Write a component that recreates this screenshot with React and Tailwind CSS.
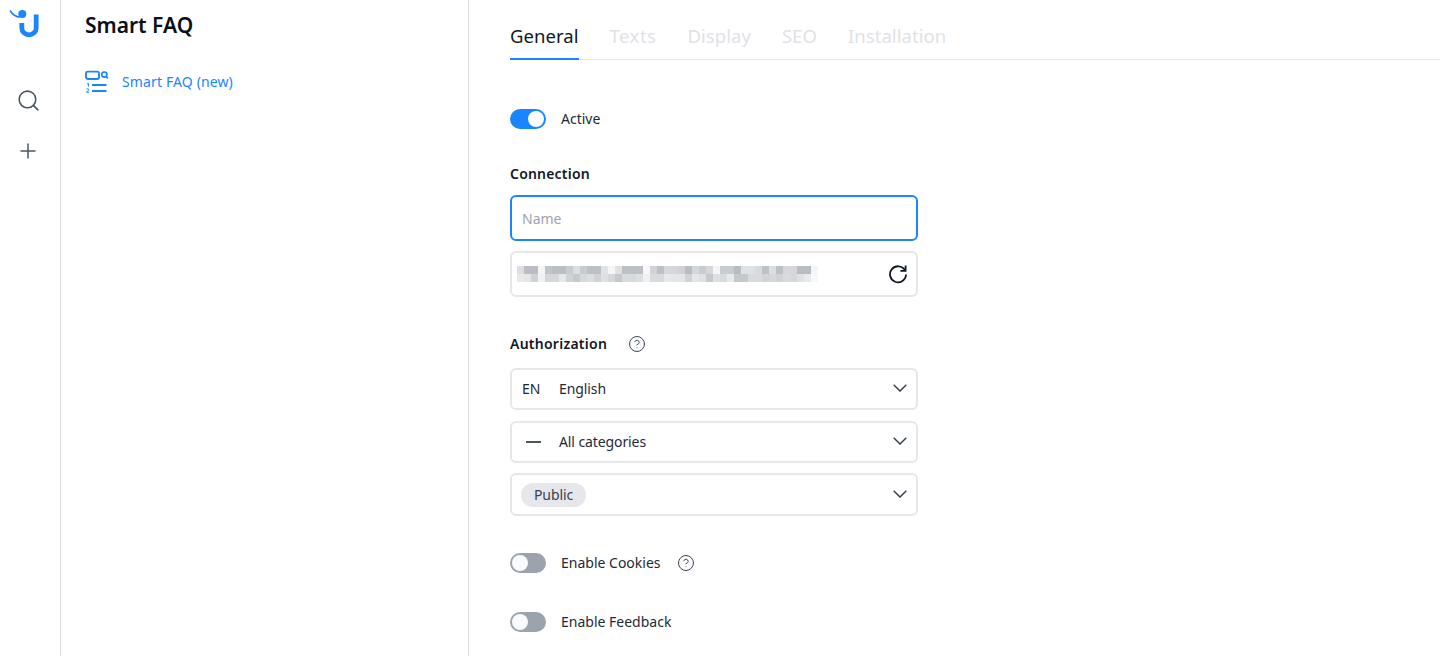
import React from "react";
import { Search, Plus, CircleHelp } from "lucide-react";

const row1 = "dcdee1 b9bdc3 b9bdc3 f5f5f6 c0c3c8 bbbfc4 bbbfc4 c8cbcf dcdee0 c8cbcf bdc0c5 bdc0c5 e2e3e5 f5f5f6 e0e1e3 bdc0c5 bdc0c5 bdc0c5 f8f8f8 d0d2d6 bdc0c5 d5d7da d5d7da d0d2d6 b9bdc3 d5d7da c8cbcf d5d7da f5f5f6 c8cbcf c8cbcf b9bdc3 e0e1e3 e0e1e3 d8dadc bdc0c5 dcdee0 bdc0c5 d5d7da d5d7da b9bdc3 b9bdc3 f5f5f6".split(" ");
const row2 = "e8e9ea e4e5e7 cfd1d5 f0f1f2 d5d7da d5d7da e6e7e9 d0d2d6 c5c8cc d5d7da dcdee0 d0d2d6 dee0e2 d5d7da c5c8cc d8dadc d8dadc dddfe1 f0f1f2 d8dadc d8dadc e8e9ea e4e5e7 e4e5e7 d0d2d6 e4e5e7 e0e1e3 c5c8cc dddfe1 d8dadc e8e9ea c5c8cc c5c8cc d8dadc d8dadc d0d2d6 d5d7da d0d2d6 d8dadc d5d7da e0e1e3 e8e9ea f8f8f8".split(" ");

function Logo() {
  return (
    <svg width="60" height="44" viewBox="0 0 60 44" fill="none" className="block self-start">
      <path d="M21.8 23V28a7.2 6.8 0 0 0 14.4 0V14.5" stroke="#1a85ff" strokeWidth="4.8" />
      <circle cx="22.3" cy="14" r="4" fill="#1a85ff" />
      <path d="M10 10.5C12.5 14.5 16 17 20 17" stroke="#1a85ff" strokeWidth="1.6" />
    </svg>
  );
}

function FaqIcon() {
  return (
    <svg width="24" height="26" viewBox="0 0 24 26" fill="none" stroke="#1a85ff" className="shrink-0">
      <rect x="1" y="2.6" width="13" height="7.4" rx="2" strokeWidth="1.9" />
      <circle cx="19.3" cy="5.6" r="2.6" strokeWidth="1.7" />
      <path d="M21.2 7.6l1.8 1.8" strokeWidth="1.7" />
      <path d="M7 16h14.5M7 22h14.5" strokeWidth="1.9" />
      <path d="M2 15l1.4-.7v3.4M1.4 20.2c.7-.9 2.8-.6 2.3.8-.2.6-1.5 1.2-2.3 2.2h2.8" strokeWidth="1" />
    </svg>
  );
}

function Toggle({ on }) {
  return on ? (
    <span className="flex h-5 w-9 items-center justify-end rounded-full bg-[#1a85ff] pr-[2px] shrink-0">
      <span className="h-4 w-4 rounded-full bg-white" />
    </span>
  ) : (
    <span className="flex h-5 w-9 items-center rounded-full bg-[#9ca3af] pl-[2px] shrink-0">
      <span className="h-4 w-4 rounded-full bg-[#f9fafb]" />
    </span>
  );
}

function Help({ className = "" }) {
  return <CircleHelp size={18} strokeWidth={1.3} className={`text-[#374151] ${className}`} />;
}

function Chevron() {
  return (
    <svg width="14" height="8" viewBox="0 0 14 8" fill="none" stroke="#374151" strokeWidth="1.5" className="relative -top-[1px] shrink-0">
      <path d="M.7.8 7 7l6.3-6.2" />
    </svg>
  );
}

function Select({ children, height = "h-[42px]" }) {
  return (
    <div className={`flex ${height} w-[408px] items-center justify-between rounded-md border-2 border-[#e5e7eb] pl-[10px] pr-[9px]`}>
      <div className="flex items-center text-sm tracking-[-0.1px] text-[#1f2937]">{children}</div>
      <Chevron />
    </div>
  );
}

export default function App() {
  return (
    <div className="flex h-[656px] overflow-hidden bg-white font-['Noto_Sans',sans-serif]">
      <aside className="flex w-[61px] shrink-0 flex-col items-center border-r border-[#d9dce1] pr-[4px]">
        <Logo />
        <Search size={25} strokeWidth={1.5} className="mt-[44px] text-[#4b5563]" />
        <Plus size={24} strokeWidth={1.5} className="mt-[26px] text-[#4b5563]" />
      </aside>

      <section className="w-[408px] shrink-0 border-r border-[#d9dce1] pl-6">
        <h1 className="mt-[11px] text-[21px] leading-7 font-semibold text-[#0b0f17]">Smart FAQ</h1>
        <div className="mt-[30px] flex items-center gap-[13px]">
          <FaqIcon />
          <span className="text-sm tracking-[0.13px] text-[#1a85ff]">Smart FAQ (new)</span>
        </div>
      </section>

      <main className="min-w-0 flex-1 pl-[41px]">
        <nav className="flex h-[60px] items-end gap-[31px] border-b border-[#e5e7eb] text-[18.5px] tracking-[0.05px] text-[#e0e2e6]">
          <span className="-mb-px border-b-2 border-[#1a85ff] pb-[8px] text-[#111827]">General</span>
          <span className="pb-[9px] tracking-[0.5px]">Texts</span>
          <span className="pb-[9px]">Display</span>
          <span className="pb-[9px]">SEO</span>
          <span className="pb-[9px]">Installation</span>
        </nav>

        <div className="mt-[49px] flex items-center gap-[15px] text-sm text-[#1f2937]">
          <Toggle on />
          <span>Active</span>
        </div>

        <h2 className="mt-[35px] text-sm leading-5 font-semibold tracking-[0.2px] text-[#111827]">Connection</h2>
        <div className="mt-[11px] flex h-[46px] w-[408px] items-center rounded-md border-2 border-[#1a85ff] pl-[10px] pt-[2px] text-sm text-[#9ca3af]">
          Name
        </div>
        <div className="mt-[10px] flex h-[46px] w-[408px] items-center justify-between rounded-md border-2 border-[#e5e7eb] pl-[5px] pr-[8px]">
          <svg width="301" height="16" viewBox="0 0 301 16" shapeRendering="crispEdges" className="block">
            {row1.map((c, i) => (
              <rect key={i} x={i * 7} y="0" width="7" height="8" fill={"#" + c} />
            ))}
            {row2.map((c, i) => (
              <rect key={i} x={i * 7} y="8" width="7" height="8" fill={"#" + c} />
            ))}
          </svg>
          <svg width="20" height="20" viewBox="0 0 20 20" fill="none" stroke="#111827" strokeWidth="1.8" className="shrink-0">
            <path d="M16.9 6.2A8 8 0 1 0 18 10.5" />
            <path d="M17.6 1.6v5.2h-5.2" />
          </svg>
        </div>

        <div className="mt-[37px] flex items-center gap-[21px]">
          <h2 className="text-sm leading-5 font-semibold tracking-[0.25px] text-[#111827]">Authorization</h2>
          <Help />
        </div>
        <div className="mt-[14px] flex flex-col">
          <Select>
            <span className="w-[37px]">EN</span>
            <span>English</span>
          </Select>
          <div className="mt-[11px]">
            <Select>
              <span className="ml-[4px] w-[33px]">
                <span className="block h-[2px] w-[15px] bg-[#4b5563]" />
              </span>
              <span>All categories</span>
            </Select>
          </div>
          <div className="mt-[10px]">
            <Select height="h-[43px]">
              <span className="-ml-px mt-[1px] rounded-full bg-[#e5e7eb] px-[13px] py-[2px] text-[#374151]">Public</span>
            </Select>
          </div>
        </div>

        <div className="mt-[37px] flex items-center gap-[15px] text-sm text-[#1f2937]">
          <Toggle />
          <span>Enable Cookies</span>
          <Help className="ml-px" />
        </div>
        <div className="mt-[39px] flex items-center gap-[15px] text-sm text-[#1f2937]">
          <Toggle />
          <span>Enable Feedback</span>
        </div>
      </main>
    </div>
  );
}
